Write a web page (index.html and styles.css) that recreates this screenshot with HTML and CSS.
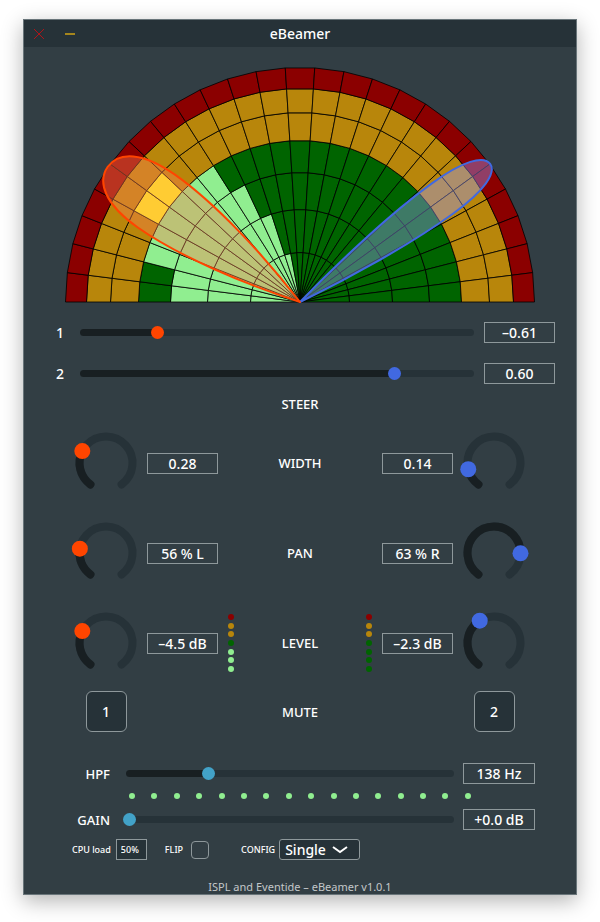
FILE: index.html
```html
<!DOCTYPE html>
<html lang="en">
<head>
<meta charset="utf-8">
<meta name="viewport" content="width=device-width, initial-scale=1">
<title>eBeamer</title>
<link rel="stylesheet" href="styles.css">
</head>
<body>
<main class="window">
  <header class="titlebar">
    <button class="win-btn close" aria-label="Close"><svg viewBox="0 0 12 12"><path d="M1 1 11 11M11 1 1 11"/></svg></button>
    <button class="win-btn minimise" aria-label="Minimise"><svg viewBox="0 0 12 12"><path d="M1 6H11"/></svg></button>
    <h1>eBeamer</h1>
  </header>

  <svg class="beams" viewBox="-235 -236 470 237" role="img" aria-label="Beam pattern">
    <g id="cells" class="cells"></g>
    <path class="beam beam-2" transform="rotate(-36)" d="M0 0C55 9.7 125 18.5 176 18.5C215 18.5 235 10.8 235 0C235 -10.8 215 -18.5 176 -18.5C125 -18.5 55 -9.7 0 0Z"/>
    <path class="beam beam-1" transform="rotate(-144.9)" d="M0 0C55 17 125 32.3 176 32.3C215 32.3 235 19 235 0C235 -19 215 -32.3 176 -32.3C125 -32.3 55 -17 0 0Z"/>
  </svg>

  <section class="steer">
    <div class="steer-row">
      <label for="steer1">1</label>
      <div class="slider one" style="--fill:19.5%"><input id="steer1" type="range" min="-1" max="1" step="0.01" value="-0.61"></div>
      <input class="value" type="text" aria-label="Steer 1 value" value="–0.61">
    </div>
    <div class="steer-row">
      <label for="steer2">2</label>
      <div class="slider two" style="--fill:80%"><input id="steer2" type="range" min="-1" max="1" step="0.01" value="0.6"></div>
      <input class="value" type="text" aria-label="Steer 2 value" value="0.60">
    </div>
    <h2>STEER</h2>
  </section>

  <section class="knobs">
    <div class="knob-row">
      <div class="knob one" data-value="0.28"><input type="range" aria-label="Width 1" min="0" max="1" step="0.01" value="0.28"></div>
      <input class="value" type="text" aria-label="Width 1 value" value="0.28">
      <span></span>
      <h2>WIDTH</h2>
      <span></span>
      <input class="value" type="text" aria-label="Width 2 value" value="0.14">
      <div class="knob two" data-value="0.14"><input type="range" aria-label="Width 2" min="0" max="1" step="0.01" value="0.14"></div>
    </div>
    <div class="knob-row">
      <div class="knob one" data-value="0.22"><input type="range" aria-label="Pan 1" min="0" max="1" step="0.01" value="0.22"></div>
      <input class="value" type="text" aria-label="Pan 1 value" value="56 % L">
      <span></span>
      <h2>PAN</h2>
      <span></span>
      <input class="value" type="text" aria-label="Pan 2 value" value="63 % R">
      <div class="knob two" data-value="0.815"><input type="range" aria-label="Pan 2" min="0" max="1" step="0.005" value="0.815"></div>
    </div>
    <div class="knob-row">
      <div class="knob one" data-value="0.28"><input type="range" aria-label="Level 1" min="0" max="1" step="0.01" value="0.28"></div>
      <input class="value" type="text" aria-label="Level 1 value" value="–4.5 dB">
      <div class="meter"><i class="red"></i><i class="gold"></i><i class="gold"></i><i class="green"></i><i class="lit"></i><i class="lit"></i><i class="lit"></i></div>
      <h2>LEVEL</h2>
      <div class="meter"><i class="red"></i><i class="gold"></i><i class="gold"></i><i class="green"></i><i class="green"></i><i class="green"></i><i class="green"></i></div>
      <input class="value" type="text" aria-label="Level 2 value" value="–2.3 dB">
      <div class="knob two" data-value="0.387"><input type="range" aria-label="Level 2" min="0" max="1" step="0.001" value="0.387"></div>
    </div>
  </section>

  <section class="mute-row">
    <button class="mute">1</button>
    <h2>MUTE</h2>
    <button class="mute">2</button>
  </section>

  <section class="input-stage">
    <div class="input-row">
      <label for="hpf">HPF</label>
      <div class="slider master" style="--fill:25%"><input id="hpf" type="range" min="0" max="100" value="25"></div>
      <input class="value" type="text" aria-label="HPF value" value="138 Hz">
    </div>
    <div class="mics"><i></i><i></i><i></i><i></i><i></i><i></i><i></i><i></i><i></i><i></i><i></i><i></i><i></i><i></i><i></i><i></i></div>
    <div class="input-row">
      <label for="gain">GAIN</label>
      <div class="slider master" style="--fill:1%"><input id="gain" type="range" min="0" max="100" value="1"></div>
      <input class="value" type="text" aria-label="Gain value" value="+0.0 dB">
    </div>
  </section>

  <section class="settings">
    <label for="cpu">CPU load</label>
    <input id="cpu" class="cpu" type="text" value="50%" readonly>
    <label for="flip">FLIP</label>
    <input id="flip" class="flip" type="checkbox">
    <label for="config">CONFIG</label>
    <div class="config">
      <select id="config"><option>Single</option></select>
      <svg viewBox="0 0 16 8"><path d="M1 1 8 6 15 1"/></svg>
    </div>
  </section>

  <footer>ISPL and Eventide – eBeamer v1.0.1</footer>
</main>
<script src="script.js"></script>
</body>
</html>
```
FILE: styles.css
```css
:root {
  --panel: #323e44;
  --dark: #263238;
  --fill-dark: #181f22;
  --outline: #8e989b;
  --one: #ff4500;
  --two: #4169e1;
  --master: #42a2c8;
}

* { box-sizing: border-box; }

body {
  margin: 0;
  padding: 19px 23px 27px;
  background: #fff;
  color: #fff;
  font: 500 14px/20px "Noto Sans", "Open Sans", sans-serif;
}

.window {
  background: var(--panel);
  border: 1px solid #69757a;
  box-shadow: 0 6px 20px rgba(0, 0, 0, 0.3);
}

h1, h2 { margin: 0; font-size: 14px; font-weight: 500; text-align: center; }
h2 { font-size: 13px; }
input, button, select { margin: 0; font: inherit; color: inherit; }

.titlebar {
  display: grid;
  grid-template-columns: 12px 12px 1fr 43px;
  column-gap: 19px;
  align-items: center;
  height: 27px;
  padding: 0 9px;
  background: var(--dark);
}
.win-btn { width: 12px; height: 12px; padding: 0; border: 0; background: none; }
.win-btn svg { display: block; fill: none; }
.close { stroke: #b01418; }
.minimise { stroke: #a5861d; stroke-width: 2; }

.beams { display: block; width: calc(100% - 82px); margin: 19px auto; }
.cells { stroke: #000; stroke-width: 0.8; stroke-linejoin: round; }
.beam { stroke-width: 2; stroke-linejoin: round; }
.beam-1 { stroke: var(--one); fill: rgba(255, 127, 80, 0.4); }
.beam-2 { stroke: var(--two); fill: rgba(155, 155, 255, 0.4); }

.value {
  width: 100%;
  height: 21px;
  padding: 0;
  border: 1px solid var(--outline);
  background: none;
  text-align: center;
}

.slider {
  height: 7px;
  border-radius: 4px;
  background: linear-gradient(var(--fill-dark), var(--fill-dark)) 0 / var(--fill) 100% no-repeat, var(--dark);
}
.slider input {
  display: block;
  width: calc(100% + 12px);
  height: 13px;
  margin: -3px -6px;
  background: none;
  appearance: none;
}
.slider input::-webkit-slider-thumb {
  width: 13px;
  height: 13px;
  border-radius: 50%;
  background: var(--accent);
  appearance: none;
}
.one { --accent: var(--one); }
.two { --accent: var(--two); }
.master { --accent: var(--master); }

.steer { display: grid; row-gap: 20px; }
.steer-row {
  display: grid;
  grid-template-columns: 24px 1fr 71px;
  align-items: center;
  padding: 0 21px 0 32px;
}
.steer-row .slider { margin-right: 10px; }
.steer h2 { margin-top: -10px; }

.knobs { display: grid; row-gap: 20px; margin-top: 14px; }
.knob-row {
  display: grid;
  grid-template-columns: 70px 77px 16px 1fr 16px 77px 70px;
  align-items: center;
  padding: 0 47px;
}
.knob-row .value { width: 71px; margin-left: 6px; }
.knob-row .value:nth-child(6) { margin-left: 0; }
.knob { position: relative; height: 70px; }
.knob svg { display: block; fill: none; stroke-width: 8; stroke-linecap: round; }
.knob .track { stroke: var(--dark); }
.knob .amount { stroke: var(--fill-dark); }
.knob circle { fill: var(--accent); stroke: none; }
.knob input { position: absolute; inset: 0; width: 100%; height: 100%; opacity: 0; }

.meter { display: flex; flex-direction: column; justify-content: space-between; width: 6px; height: 58px; }
.meter:nth-child(3) { justify-self: end; }
.meter i, .mics i { width: 6px; height: 6px; border-radius: 50%; }
.red { background: #8b0000; }
.gold { background: #b8860b; }
.green { background: #006400; }
.lit, .mics i { background: #90ee90; }

.mute-row {
  display: grid;
  grid-template-columns: 70px 1fr 70px;
  align-items: center;
  justify-items: center;
  margin-top: 13px;
  padding: 0 47px;
}
.mute {
  width: 41px;
  height: 41px;
  padding: 0;
  border: 1px solid var(--outline);
  border-radius: 6px;
  background: var(--dark);
}

.input-stage { margin-top: 31px; }
.input-row {
  display: grid;
  grid-template-columns: 62px 1fr 72px;
  align-items: center;
  padding: 0 41px 0 24px;
}
.input-row label { font-size: 13px; text-align: right; }
.input-row .slider { margin: 0 9px 0 16px; }
.mics { display: flex; justify-content: space-between; margin: 9px 105px 10px; }

.settings {
  display: flex;
  align-items: center;
  height: 21px;
  margin-top: 9px;
  padding-left: 48px;
  font-size: 9px;
}
.cpu {
  width: 31px;
  height: 21px;
  margin: 0 18px 0 5px;
  padding: 0 4px;
  border: 1px solid var(--outline);
  background: var(--dark);
}
.flip {
  width: 18px;
  height: 18px;
  margin: 0 32px 0 8px;
  border: 1px solid var(--outline);
  border-radius: 4px;
  appearance: none;
}
.config { position: relative; margin-left: 4px; }
.config select {
  display: block;
  width: 81px;
  height: 21px;
  padding: 0 5px;
  border: 1px solid var(--outline);
  border-radius: 3px;
  background: var(--dark);
  font-size: 14px;
  line-height: 19px;
  appearance: none;
}
.config svg {
  position: absolute;
  top: 7px;
  right: 12px;
  width: 16px;
  height: 8px;
  fill: none;
  stroke: #fff;
  stroke-width: 2;
  pointer-events: none;
}

footer {
  margin-top: 20px;
  color: #c3c7c9;
  font-size: 11px;
  font-weight: 400;
  line-height: 14px;
  text-align: center;
}
```
FILE: script.js
```js
const NS = "http://www.w3.org/2000/svg";

function add(parent, tag, attrs) {
  const el = document.createElementNS(NS, tag);
  for (const key in attrs) el.setAttribute(key, attrs[key]);
  parent.appendChild(el);
  return el;
}

// Polar energy grid: 25 directions by 7 level rings.
const radii = [0, 49.5, 92.5, 129.5, 161.5, 189.5, 213.5, 234.5];
const idle = ["#006400", "#006400", "#006400", "#006400", "#b8860b", "#b8860b", "#8b0000"];
const active = ["#90ee90", "#90ee90", "#90ee90", "#90ee90", "#ffff20", "#ffff20", "#ff0000"];
const levels = [3, 3, 4, 4, 5, 5, 4, 4, 3, 2, 1];
const sectors = 25;
const cells = document.getElementById("cells");

function point(radius, sector) {
  const angle = Math.PI * sector / sectors;
  return (-radius * Math.cos(angle)).toFixed(2) + "," + (-radius * Math.sin(angle)).toFixed(2);
}

for (let s = 0; s < sectors; s++) {
  for (let r = 0; r < idle.length; r++) {
    add(cells, "polygon", {
      points: [point(radii[r], s), point(radii[r + 1], s), point(radii[r + 1], s + 1), point(radii[r], s + 1)].join(" "),
      fill: r < (levels[s] || 0) ? active[r] : idle[r]
    });
  }
}

// Rotary knobs sweep 288 degrees, starting at 216 degrees clockwise from the top.
const arc = "M-15.6 21.4A26.5 26.5 0 1 1 15.6 21.4";
document.querySelectorAll(".knob").forEach((knob) => {
  const value = Number(knob.dataset.value);
  const angle = (216 + 288 * value) * Math.PI / 180;
  const svg = document.createElementNS(NS, "svg");
  svg.setAttribute("viewBox", "-35 -35 70 70");
  add(svg, "path", { class: "track", d: arc });
  add(svg, "path", { class: "amount", d: arc, pathLength: 100, "stroke-dasharray": value * 100 + " 200" });
  add(svg, "circle", { cx: 26.5 * Math.sin(angle), cy: -26.5 * Math.cos(angle), r: 8 });
  knob.prepend(svg);
});
```
